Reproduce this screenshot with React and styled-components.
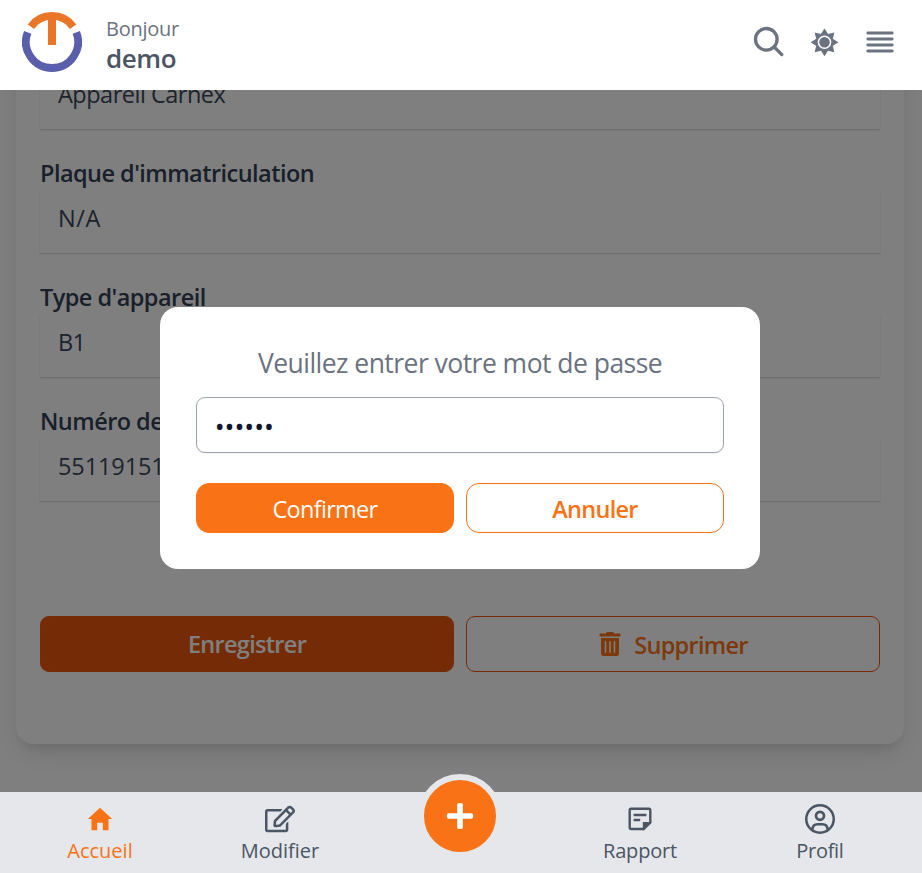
import React from "react";
import styled, { createGlobalStyle } from "styled-components";
import { IoMdHome } from "react-icons/io";
import { FaRegEdit, FaTrashAlt } from "react-icons/fa";

const GlobalStyle = createGlobalStyle`
  *, *::before, *::after { box-sizing: border-box; }
  body {
    margin: 0;
    background: #fff;
    font-family: "Open Sans", "Noto Sans", sans-serif;
    overflow: hidden;
  }
`;

const Screen = styled.div`
  display: flex;
  flex-direction: column;
  height: 873px;
`;

const Header = styled.header`
  display: flex;
  align-items: center;
  flex: 0 0 90px;
  padding: 0 28px 6px 22px;
  background: #fff;
`;

const Greeting = styled.div`
  display: flex;
  flex-direction: column;
  flex: 1;
  margin-left: 24px;
  padding-top: 4px;
`;

const Hello = styled.span`
  font-size: 20px;
  line-height: 28px;
  letter-spacing: -0.26px;
  color: #6b7280;
`;

const UserName = styled.span`
  font-size: 26px;
  font-weight: 600;
  line-height: 31px;
  letter-spacing: -0.4px;
  color: #4b5563;
`;

const Tools = styled.div`
  display: flex;
  align-items: center;
  gap: 25px;
  color: #6b7280;
`;

const ToolButton = styled.button`
  display: flex;
  padding: 0;
  border: 0;
  background: none;
  color: inherit;
`;

const Main = styled.main`
  position: relative;
  flex: 1;
  min-height: 0;
  overflow: hidden;
  padding: 0 18px 0 16px;
`;

const Card = styled.section`
  height: 714px;
  margin-top: -60px;
  padding: 37px 24px 0;
  border-radius: 18px;
  background: #fff;
  box-shadow: 0 11px 28px rgba(0, 0, 0, 0.08), 0 8px 14px -6px rgba(0, 0, 0, 0.12);
`;

const Field = styled.div`
  margin-bottom: 26px;
`;

const FieldLabel = styled.div`
  height: 36px;
  font-size: 23.5px;
  font-weight: 600;
  line-height: 37px;
  letter-spacing: -0.54px;
  color: #334155;
`;

const FieldValue = styled.div`
  height: 62px;
  padding-left: 18px;
  font-size: 23.5px;
  line-height: 55px;
  letter-spacing: ${(p) => p.$spacing || "0"};
  color: #3b4658;
  box-shadow: 0 1px 2px rgba(0, 0, 0, 0.1), 0 1px 1px rgba(0, 0, 0, 0.05);
`;

const Actions = styled.div`
  display: grid;
  grid-template-columns: 1fr 1fr;
  gap: 12px;
  margin-top: ${(p) => p.$top}px;
`;

const Button = styled.button`
  display: flex;
  align-items: center;
  justify-content: center;
  gap: 12px;
  height: ${(p) => p.$height}px;
  padding: ${(p) => p.$nudge || 0}px 0 0;
  border: 1px solid ${(p) => p.$tone};
  border-radius: ${(p) => p.$radius}px;
  background: ${(p) => (p.$filled ? p.$tone : "transparent")};
  color: ${(p) => (p.$filled ? "#fff" : "#f97316")};
  font-family: inherit;
  font-size: 23.5px;
  font-weight: ${(p) => p.$weight || 600};
  letter-spacing: -0.7px;

  svg {
    margin-bottom: 2px;
  }
`;

const Overlay = styled.div`
  position: absolute;
  inset: 0;
  display: flex;
  align-items: center;
  justify-content: center;
  padding: 0 2px 6px 0;
  background: rgba(0, 0, 0, 0.5);
`;

const Dialog = styled.div`
  width: 600px;
  height: 262px;
  padding: 36px;
  border-radius: 18px;
  background: #fff;
`;

const DialogTitle = styled.h2`
  margin: 0;
  padding-top: 1px;
  font-size: 26.5px;
  font-weight: 400;
  line-height: 38px;
  letter-spacing: -0.53px;
  text-align: center;
  color: #6b7280;
`;

const PasswordInput = styled.input`
  display: block;
  width: 100%;
  height: 56px;
  margin-top: 15px;
  padding: 1px 18px 0;
  border: 1px solid #9ca3af;
  border-radius: 9px;
  outline: 0;
  background: #fff;
  font-family: "Noto Sans", sans-serif;
  font-size: 25px;
  letter-spacing: 0.45px;
  color: #0f172a;
  box-shadow: 0 1px 2px rgba(0, 0, 0, 0.05);
`;

const BottomBar = styled.nav`
  position: relative;
  display: grid;
  grid-template-columns: repeat(5, 1fr);
  flex: 0 0 81px;
  padding: 0 12px 0 10px;
  background: #e5e7eb;
`;

const Tab = styled.a`
  display: flex;
  flex-direction: column;
  align-items: center;
  padding-top: 12px;
  color: ${(p) => (p.$active ? "#f97316" : "#4b5563")};
`;

const TabIcon = styled.span`
  display: flex;
  align-items: center;
  justify-content: center;
  height: 30px;
`;

const TabLabel = styled.span`
  font-size: 20px;
  line-height: 34px;
  letter-spacing: ${(p) => p.$spacing || "0"};
`;

const AddSlot = styled.div`
  display: flex;
  justify-content: center;
`;

const AddButton = styled.button`
  display: flex;
  align-items: center;
  justify-content: center;
  width: 84px;
  height: 84px;
  margin-top: -18px;
  padding: 0;
  border: 6px solid #e5e7eb;
  border-radius: 50%;
  background: #f97316;
`;

const Logo = () => (
  <svg width="60" height="60" viewBox="0 0 60 60" fill="none" strokeWidth="7.8">
    <path d="M8.9 14.7A26.1 26.1 0 0 1 51.1 14.7" stroke="#e87626" />
    <path d="M30 4V33" stroke="#e87626" strokeWidth="8" />
    <path d="M5.7 20.4A26.1 26.1 0 1 0 54.3 20.4" stroke="#5a5fab" />
  </svg>
);

const SearchIcon = () => (
  <svg width="32" height="32" viewBox="0 0 32 32" fill="none" stroke="currentColor">
    <circle cx="14.3" cy="13.3" r="10.8" strokeWidth="3.3" />
    <path d="M22.2 21L29.8 28.6" strokeWidth="3.2" strokeLinecap="round" />
  </svg>
);

const SUN_RAYS = [0, 45, 90, 135, 180, 225, 270, 315];

const SunIcon = () => (
  <svg width="32" height="32" viewBox="-15.5 -16.3 32 32" fill="currentColor">
    {SUN_RAYS.map((angle) => (
      <path key={angle} d="M-3.6 -8.2L0 -13.9L3.6 -8.2Z" transform={`rotate(${angle})`} />
    ))}
    <circle r="7.9" fill="none" stroke="currentColor" strokeWidth="2.2" />
    <circle r="5.3" />
  </svg>
);

const MenuIcon = () => (
  <svg width="28" height="28" viewBox="0 0 28 28" stroke="currentColor" strokeWidth="2.8" strokeLinecap="round">
    <path d="M1.8 5H26.2M1.8 11H26.2M1.8 17H26.2M1.8 23H26.2" />
  </svg>
);

const PlusIcon = () => (
  <svg width="28" height="28" viewBox="0 0 28 28" fill="#fff">
    <rect x="0.9" y="11.2" width="26.2" height="5.6" rx="1.7" />
    <rect x="11.2" y="0.9" width="5.6" height="26.2" rx="1.7" />
  </svg>
);

const ReportIcon = () => (
  <svg width="24" height="24" viewBox="0 0 24 24" fill="none" stroke="currentColor">
    <path d="M16 22H3.2A1.5 1.5 0 0 1 1.7 20.5V3.2A1.5 1.5 0 0 1 3.2 1.7H20.8A1.5 1.5 0 0 1 22.3 3.2V15.5" strokeWidth="2.4" />
    <path d="M5.6 8H18.4M5.6 13H12.2" strokeWidth="2.3" />
    <path d="M14.8 23.2V15H23.5V16L16.2 23.2Z" fill="currentColor" stroke="none" />
  </svg>
);

const ProfileIcon = () => (
  <svg width="30" height="30" viewBox="0 0 30 30" fill="none" stroke="currentColor" strokeWidth="2.5">
    <circle cx="15" cy="15" r="13.75" />
    <circle cx="15" cy="11.8" r="4" strokeWidth="2.7" />
    <path d="M7.4 25.6C7.6 22.5 9.5 20.3 12.5 20.3H17.5C20.5 20.3 22.4 22.5 22.6 25.6" />
  </svg>
);

const FIELDS = [
  { value: "Appareil Carnex", spacing: "-0.5px" },
  { label: "Plaque d'immatriculation", value: "N/A", spacing: "0.6px" },
  { label: "Type d'appareil", value: "B1", spacing: "-0.8px" },
  { label: "Numéro de série", value: "55119151", spacing: "-0.1px" },
];

export default function App() {
  return (
    <Screen>
      <GlobalStyle />
      <Header>
        <Logo />
        <Greeting>
          <Hello>Bonjour</Hello>
          <UserName>demo</UserName>
        </Greeting>
        <Tools>
          <ToolButton aria-label="Rechercher"><SearchIcon /></ToolButton>
          <ToolButton aria-label="Thème"><SunIcon /></ToolButton>
          <ToolButton aria-label="Menu"><MenuIcon /></ToolButton>
        </Tools>
      </Header>
      <Main>
        <Card>
          {FIELDS.map(({ label, value, spacing }) => (
            <Field key={value}>
              {label && <FieldLabel>{label}</FieldLabel>}
              <FieldValue $spacing={spacing}>{value}</FieldValue>
            </Field>
          ))}
          <Actions $top={115}>
            <Button $filled $tone="#ea580c" $height={56} $radius={9}>Enregistrer</Button>
            <Button $tone="#ea580c" $height={56} $radius={9} $nudge={2}>
              <FaTrashAlt size={24} />
              Supprimer
            </Button>
          </Actions>
        </Card>
        <Overlay>
          <Dialog>
            <DialogTitle>Veuillez entrer votre mot de passe</DialogTitle>
            <PasswordInput type="password" defaultValue="demo12" />
            <Actions $top={30}>
              <Button $filled $tone="#f97316" $height={50} $radius={13} $weight={400} $nudge={2}>Confirmer</Button>
              <Button $tone="#f97316" $height={50} $radius={13} $nudge={2}>Annuler</Button>
            </Actions>
          </Dialog>
        </Overlay>
      </Main>
      <BottomBar>
        <Tab $active>
          <TabIcon><IoMdHome size={30} /></TabIcon>
          <TabLabel>Accueil</TabLabel>
        </Tab>
        <Tab>
          <TabIcon><FaRegEdit size={30} /></TabIcon>
          <TabLabel>Modifier</TabLabel>
        </Tab>
        <AddSlot>
          <AddButton aria-label="Ajouter"><PlusIcon /></AddButton>
        </AddSlot>
        <Tab>
          <TabIcon><ReportIcon /></TabIcon>
          <TabLabel $spacing="-0.19px">Rapport</TabLabel>
        </Tab>
        <Tab>
          <TabIcon><ProfileIcon /></TabIcon>
          <TabLabel $spacing="-0.3px">Profil</TabLabel>
        </Tab>
      </BottomBar>
    </Screen>
  );
}
